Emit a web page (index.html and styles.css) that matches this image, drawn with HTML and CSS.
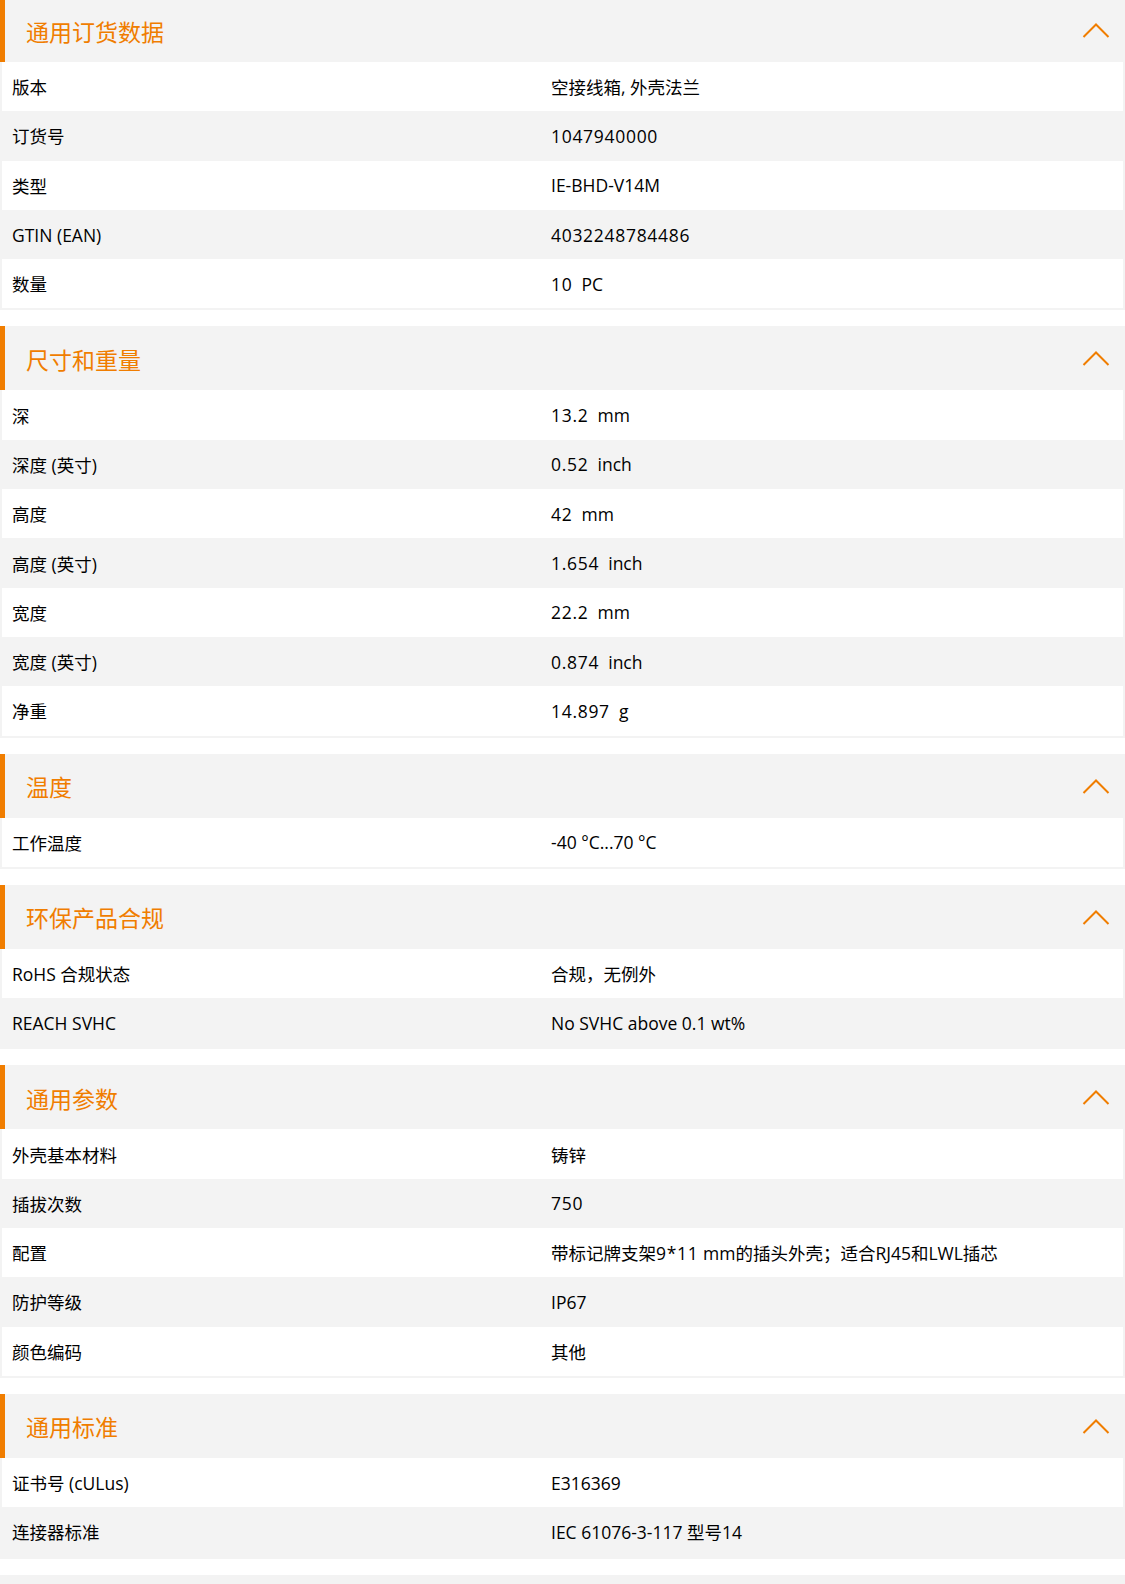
FILE: index.html
```html
<!DOCTYPE html>
<html lang="zh-CN">
<head>
<meta charset="utf-8">
<title>产品数据</title>
<link rel="stylesheet" href="styles.css">
</head>
<body>
<div class="page">

  <section class="section">
    <div class="section-head">
      <h2 class="section-title">通用订货数据</h2>
      <svg class="chevron" width="28" height="15" viewBox="0 0 28 15"><polyline points="1.5,14 14,1.5 26.5,14" fill="none" stroke="#f07d00" stroke-width="2"/></svg>
    </div>
    <div class="rows">
      <div class="row"><div class="label">版本</div><div class="value">空接线箱, 外壳法兰</div></div>
      <div class="row"><div class="label">订货号</div><div class="value"><span class="num">1047940000</span></div></div>
      <div class="row"><div class="label">类型</div><div class="value">IE-BHD-V14M</div></div>
      <div class="row"><div class="label">GTIN (EAN)</div><div class="value"><span class="num">4032248784486</span></div></div>
      <div class="row"><div class="label">数量</div><div class="value"><span class="num">10</span>&nbsp; PC</div></div>
    </div>
  </section>

  <section class="section">
    <div class="section-head">
      <h2 class="section-title">尺寸和重量</h2>
      <svg class="chevron" width="28" height="15" viewBox="0 0 28 15"><polyline points="1.5,14 14,1.5 26.5,14" fill="none" stroke="#f07d00" stroke-width="2"/></svg>
    </div>
    <div class="rows">
      <div class="row"><div class="label">深</div><div class="value"><span class="num">13.2</span>&nbsp; mm</div></div>
      <div class="row"><div class="label">深度 (英寸)</div><div class="value"><span class="num">0.52</span>&nbsp; inch</div></div>
      <div class="row"><div class="label">高度</div><div class="value"><span class="num">42</span>&nbsp; mm</div></div>
      <div class="row"><div class="label">高度 (英寸)</div><div class="value"><span class="num">1.654</span>&nbsp; inch</div></div>
      <div class="row"><div class="label">宽度</div><div class="value"><span class="num">22.2</span>&nbsp; mm</div></div>
      <div class="row"><div class="label">宽度 (英寸)</div><div class="value"><span class="num">0.874</span>&nbsp; inch</div></div>
      <div class="row"><div class="label">净重</div><div class="value"><span class="num">14.897</span>&nbsp; g</div></div>
    </div>
  </section>

  <section class="section">
    <div class="section-head">
      <h2 class="section-title">温度</h2>
      <svg class="chevron" width="28" height="15" viewBox="0 0 28 15"><polyline points="1.5,14 14,1.5 26.5,14" fill="none" stroke="#f07d00" stroke-width="2"/></svg>
    </div>
    <div class="rows">
      <div class="row"><div class="label">工作温度</div><div class="value">-40 °C...70 °C</div></div>
    </div>
  </section>

  <section class="section">
    <div class="section-head">
      <h2 class="section-title">环保产品合规</h2>
      <svg class="chevron" width="28" height="15" viewBox="0 0 28 15"><polyline points="1.5,14 14,1.5 26.5,14" fill="none" stroke="#f07d00" stroke-width="2"/></svg>
    </div>
    <div class="rows">
      <div class="row"><div class="label">RoHS 合规状态</div><div class="value">合规，无例外</div></div>
      <div class="row"><div class="label">REACH SVHC</div><div class="value">No SVHC above 0.1 wt%</div></div>
    </div>
  </section>

  <section class="section">
    <div class="section-head">
      <h2 class="section-title">通用参数</h2>
      <svg class="chevron" width="28" height="15" viewBox="0 0 28 15"><polyline points="1.5,14 14,1.5 26.5,14" fill="none" stroke="#f07d00" stroke-width="2"/></svg>
    </div>
    <div class="rows">
      <div class="row"><div class="label">外壳基本材料</div><div class="value">铸锌</div></div>
      <div class="row"><div class="label">插拔次数</div><div class="value"><span class="num">750</span></div></div>
      <div class="row"><div class="label">配置</div><div class="value">带标记牌支架<span class="num">9*11</span> mm的插头外壳；适合RJ45和LWL插芯</div></div>
      <div class="row"><div class="label">防护等级</div><div class="value">IP67</div></div>
      <div class="row"><div class="label">颜色编码</div><div class="value">其他</div></div>
    </div>
  </section>

  <section class="section">
    <div class="section-head">
      <h2 class="section-title">通用标准</h2>
      <svg class="chevron" width="28" height="15" viewBox="0 0 28 15"><polyline points="1.5,14 14,1.5 26.5,14" fill="none" stroke="#f07d00" stroke-width="2"/></svg>
    </div>
    <div class="rows">
      <div class="row"><div class="label">证书号 (cULus)</div><div class="value">E316369</div></div>
      <div class="row"><div class="label">连接器标准</div><div class="value">IEC 61076-3-117 型号14</div></div>
    </div>
  </section>

  <div class="next-block"></div>
</div>
</body>
</html>
```
FILE: styles.css
```css
html, body {
  margin: 0;
  padding: 0;
  background: #ffffff;
}

body {
  font-family: "Open Sans", "Noto Sans CJK SC", sans-serif;
  color: #000000;
  overflow: hidden;
}

.page {
  width: 1125px;
  margin-top: -2px;
}

.section {
  margin-bottom: 16px;
}

.section-head {
  display: flex;
  align-items: center;
  justify-content: space-between;
  height: 64px;
  background: #f3f3f3;
  border-left: 5px solid #f07d00;
  box-sizing: border-box;
  padding: 0 15px 0 21px;
}

.section-title {
  margin: 0;
  font-family: "Noto Sans CJK SC", sans-serif;
  font-weight: 400;
  font-size: 23px;
  color: #f07d00;
  line-height: 1;
  padding-top: 2px;
}

.chevron {
  display: block;
  margin-top: 1px;
}

.rows {
  border: 2px solid #f3f3f3;
  border-top: none;
}

.row {
  display: grid;
  grid-template-columns: 539px 1fr;
  align-items: center;
  height: 49.3px;
  padding-left: 10px;
  font-size: 17.5px;
  background: #ffffff;
}

.row:nth-child(even) {
  background: #f3f3f3;
}

.label,
.value {
  white-space: nowrap;
}

.num {
  letter-spacing: 0.7px;
}

.next-block {
  height: 64px;
  background: #f3f3f3;
}
```
